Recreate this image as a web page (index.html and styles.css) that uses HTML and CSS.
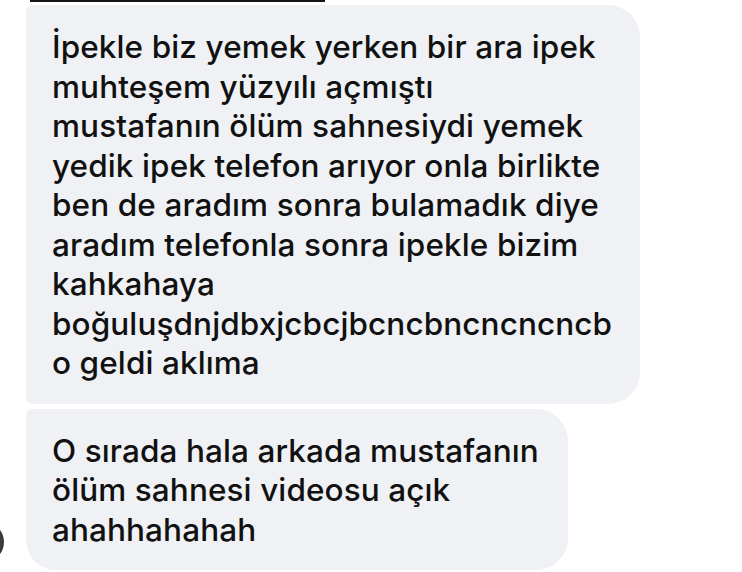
FILE: index.html
```html
<!DOCTYPE html>
<html lang="tr">
<head>
<meta charset="utf-8">
<link rel="stylesheet" href="styles.css">
</head>
<body>
<div class="thread">
  <div class="prev-edge"></div>
  <div class="group">
    <div class="avatar"></div>
    <div class="bubble bubble-first">İpekle biz yemek yerken bir ara ipek<br>muhteşem yüzyılı açmıştı<br>mustafanın ölüm sahnesiydi yemek<br>yedik ipek telefon arıyor onla birlikte<br>ben de aradım sonra bulamadık diye<br>aradım telefonla sonra ipekle bizim<br>kahkahaya<br>boğuluşdnjdbxjcbcjbcncbncncncncb<br>o geldi aklıma</div>
    <div class="bubble bubble-last">O sırada hala arkada mustafanın<br>ölüm sahnesi videosu açık<br>ahahhahahah</div>
  </div>
</div>
</body>
</html>
```

FILE: styles.css
```css
html, body {
  margin: 0;
  padding: 0;
  background: #ffffff;
}

body {
  width: 742px;
  height: 572px;
  overflow: hidden;
  font-family: "Inter", "Roboto", "Liberation Sans", sans-serif;
  color: #111111;
}

.thread {
  display: flex;
  flex-direction: column;
  align-items: flex-start;
  padding-left: 26px;
}

.prev-edge {
  margin-left: 4px;
  width: 295px;
  height: 2px;
  background: #151515;
}

.group {
  position: relative;
  display: flex;
  flex-direction: column;
  align-items: flex-start;
  gap: 5px;
  margin-top: 3px;
}

.avatar {
  position: absolute;
  left: -62px;
  bottom: 8px;
  width: 40px;
  height: 40px;
  border-radius: 50%;
  background: radial-gradient(circle at 70% 50%, #555 0%, #222 60%, #111 100%);
}

.bubble {
  box-sizing: border-box;
  background: #eff1f5;
  padding: 22px 0 21px 26px;
  font-size: 31.5px;
  font-weight: 500;
  line-height: 39.5px;
  white-space: nowrap;
  letter-spacing: 0.1px;
}

.bubble-first {
  width: 614px;
  border-radius: 7px 32px 32px 6px;
}

.bubble-last {
  width: 542px;
  border-radius: 6px 32px 32px 30px;
}
```
